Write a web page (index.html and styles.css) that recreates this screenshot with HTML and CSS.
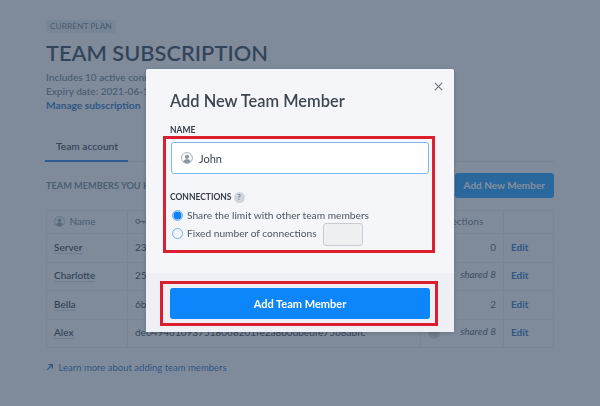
FILE: index.html
```html
<!DOCTYPE html>
<html lang="en">

<head>
    <meta charset="UTF-8">
    <title>Team Subscription</title>
    <link rel="stylesheet" href="styles.css">
</head>

<body>
    <div class="page">
        <span class="plan-tag">CURRENT PLAN</span>
        <h1>TEAM SUBSCRIPTION</h1>
        <p class="info">Includes 10 active connections</p>
        <p class="info">Expiry date: 2021-06-12</p>
        <a class="manage">Manage subscription</a>

        <div class="tabs">
            <span class="tab">Team account</span>
        </div>

        <div class="members-head">
            <span class="members-title">TEAM MEMBERS YOU HAVE ADDED</span>
            <span class="add-new">Add New Member</span>
        </div>

        <table class="members">
            <tr>
                <th class="col-name">
                    <svg class="user-icon" viewBox="0 0 16 16"><circle cx="8" cy="8" r="7.2" fill="none" stroke="currentColor"/><circle cx="8" cy="6.4" r="2.8" fill="currentColor"/><path d="M3 12.6c1-2.4 3-3 5-3s4 .6 5 3c-1.3 1.3-3 2-5 2s-3.7-.7-5-2z" fill="currentColor"/></svg>
                    Name
                </th>
                <th class="col-key">
                    <svg class="key-icon" viewBox="0 0 16 10"><circle cx="4" cy="5" r="2.8" fill="none" stroke="currentColor" stroke-width="1.5"/><path d="M7 5h8M12 5v3M15 5v2.5" fill="none" stroke="currentColor" stroke-width="1.5"/></svg>
                    Key
                </th>
                <th class="col-conn">Connections</th>
                <th class="col-edit"></th>
            </tr>
            <tr>
                <td><span class="member">Server</span></td>
                <td>23d81f6c0a47be95d2c8137ae60bf4d9a1c5e872</td>
                <td class="conn">0</td>
                <td><a class="edit">Edit</a></td>
            </tr>
            <tr>
                <td><span class="member">Charlotte</span></td>
                <td>25be07c94d1fa36e8b20c7d5f1936ea04b8d2c17</td>
                <td class="conn"><span class="info-dot"></span><i>shared 8</i></td>
                <td><a class="edit">Edit</a></td>
            </tr>
            <tr>
                <td><span class="member">Bella</span></td>
                <td>6bf2913ea7d05c48e16ba3</td>
                <td class="conn">2</td>
                <td><a class="edit">Edit</a></td>
            </tr>
            <tr>
                <td><span class="member">Alex</span></td>
                <td>de0494610937518068201fe2a8b0dbedfe7568abfc</td>
                <td class="conn"><span class="info-dot"></span><i>shared 8</i></td>
                <td><a class="edit">Edit</a></td>
            </tr>
        </table>

        <a class="learn">
            <svg class="arrow" viewBox="0 0 10 10"><path d="M1.5 8.5L8 2M3 2h5v5" fill="none" stroke="currentColor" stroke-width="1.5"/></svg>
            Learn more about adding team members
        </a>
    </div>

    <div class="overlay"></div>

    <div class="modal">
        <div class="modal-body">
            <span class="close">
                <svg viewBox="0 0 10 10"><path d="M1 1l8 8M9 1l-8 8" fill="none" stroke="currentColor" stroke-width="1.3"/></svg>
            </span>
            <h2>Add New Team Member</h2>
            <label class="field-label">NAME</label>
            <div class="name-input">
                <svg class="user-icon" viewBox="0 0 16 16"><circle cx="8" cy="8" r="7.2" fill="none" stroke="currentColor"/><circle cx="8" cy="6.4" r="2.8" fill="currentColor"/><path d="M3 12.6c1-2.4 3-3 5-3s4 .6 5 3c-1.3 1.3-3 2-5 2s-3.7-.7-5-2z" fill="currentColor"/></svg>
                <span>John</span>
            </div>
            <div class="conn-label">
                <span class="field-label">CONNECTIONS</span>
                <span class="help">?</span>
            </div>
            <div class="radio-row">
                <span class="radio checked"></span>
                <span>Share the limit with other team members</span>
            </div>
            <div class="radio-row">
                <span class="radio"></span>
                <span>Fixed number of connections</span>
                <span class="number-box"></span>
            </div>
        </div>
        <div class="modal-foot">
            <button class="submit">Add Team Member</button>
        </div>
        <div class="mark mark-form"></div>
        <div class="mark mark-button"></div>
    </div>
</body>

</html>
```

FILE: styles.css
```css
html,
body {
    height: 100%;
}

body {
    margin: 0;
    background: #f6f7f9;
    color: #1f2d3d;
    font-family: Lato, "Open Sans", sans-serif;
    overflow: hidden;
}

.page {
    width: 508px;
    padding: 20px 46px 0;
}

.plan-tag {
    display: block;
    width: fit-content;
    padding: 0 4px;
    background: #e3e6ea;
    border-radius: 2px;
    color: #5c6b7c;
    font-size: 8.4px;
    line-height: 13px;
}

h1 {
    margin: 7px 0 4px;
    font-size: 21.8px;
    line-height: 26px;
    font-weight: 600;
}

.info {
    margin: 0;
    color: #667484;
    font-size: 10px;
    line-height: 14px;
    font-weight: 600;
}

.manage {
    display: block;
    color: #0f5fb5;
    font-size: 10.2px;
    line-height: 14px;
    font-weight: 700;
}

.tabs {
    margin-top: 28px;
    height: 21px;
    border-bottom: 1px solid #dcdfe4;
}

.tab {
    display: block;
    width: 83px;
    height: 22px;
    margin-left: -1px;
    padding-left: 11px;
    box-sizing: border-box;
    border-bottom: 2px solid #0f6fd0;
    font-size: 10.2px;
    line-height: 13px;
    font-weight: 600;
}

.members-head {
    display: flex;
    justify-content: space-between;
    align-items: center;
    margin-top: 11px;
}

.members-title {
    color: #667484;
    font-size: 9.2px;
    font-weight: 700;
}

.add-new {
    padding: 0 9px;
    background: #008fff;
    border-radius: 3px;
    color: #fff;
    font-size: 10px;
    line-height: 25px;
    font-weight: 700;
}

.members {
    width: 100%;
    margin-top: 12px;
    border-collapse: collapse;
    table-layout: fixed;
    font-size: 10px;
}

.members th,
.members td {
    height: 28.5px;
    padding: 0 7px 2px;
    box-sizing: border-box;
    border: 1px solid #e1e4e8;
    white-space: nowrap;
    overflow: hidden;
    text-align: left;
}

.members th {
    height: 23px;
    color: #5c6b7c;
    font-weight: 400;
}

.col-name {
    width: 81px;
}

.col-conn {
    width: 83px;
}

.col-edit {
    width: 50px;
}

.members .conn {
    text-align: right;
    color: #3a4757;
}

.info-dot {
    float: left;
    width: 12px;
    height: 12px;
    margin-top: 2px;
    background: #ccd1d7;
    border-radius: 50%;
}

.member {
    border-bottom: 1px solid #c6cbd2;
    font-weight: 600;
}

.edit {
    color: #0f5fb5;
    font-weight: 700;
}

.user-icon {
    width: 11px;
    height: 11px;
    vertical-align: -2px;
    margin-right: 2px;
    color: #8b96a3;
}

.key-icon {
    width: 11px;
    height: 7px;
    color: #5c6b7c;
}

.learn {
    display: block;
    margin-top: 14px;
    color: #0f5fb5;
    font-size: 9.5px;
}

.arrow {
    width: 8px;
    height: 8px;
    margin-right: 2px;
}

.overlay {
    position: fixed;
    inset: 0;
    background: rgba(63, 81, 105, 0.65);
}

.modal {
    position: fixed;
    left: 146px;
    top: 69px;
    width: 308px;
    height: 263px;
    display: flex;
    flex-direction: column;
    background: #f5f6f9;
    box-shadow: 0 1px 4px rgba(0, 0, 0, 0.2);
    border-radius: 2px;
}

.modal-body {
    flex: 1;
    padding: 22px 25px 0 24px;
}

.close {
    position: absolute;
    top: 13px;
    right: 11px;
    width: 9px;
    height: 9px;
    color: #6d7783;
}

.close svg {
    display: block;
}

h2 {
    margin: 0 0 13px;
    color: #3c4650;
    font-size: 16.4px;
    line-height: 20px;
    font-weight: 600;
}

.field-label {
    display: block;
    color: #343d47;
    font-size: 8.5px;
    line-height: 12px;
    font-weight: 700;
}

.name-input {
    display: flex;
    align-items: center;
    gap: 6px;
    height: 32px;
    box-sizing: border-box;
    margin: 6px 0 0 1px;
    padding-left: 9px;
    background: #fff;
    border: 1.5px solid #7db8ee;
    border-radius: 3px;
    color: #3a4450;
    font-size: 11px;
}

.name-input .user-icon {
    width: 12px;
    height: 12px;
    margin: 0;
}

.conn-label {
    display: flex;
    align-items: center;
    gap: 2px;
    margin: 17px 0 3px;
}

.help {
    width: 11px;
    height: 11px;
    background: #d0d6dc;
    border-radius: 50%;
    color: #7a8591;
    font-size: 8px;
    line-height: 11px;
    font-weight: 700;
    text-align: center;
}

.radio-row {
    display: flex;
    align-items: center;
    height: 18px;
    margin-left: 2px;
    color: #4b5561;
    font-size: 10.2px;
}

.radio {
    width: 9px;
    height: 9px;
    margin-right: 4px;
    border: 1px solid #6fb1ef;
    border-radius: 50%;
}

.radio.checked {
    border-color: #7fbcf5;
    background: #0f83f5;
    box-shadow: inset 0 0 0 0.5px #fff;
}

.number-box {
    width: 40px;
    height: 23px;
    box-sizing: border-box;
    margin: 3px 0 0 6px;
    background: #eef0f2;
    border: 1px solid #c7ccd2;
    border-radius: 3px;
}

.modal-foot {
    height: 59px;
    padding: 15px 24px 0;
    box-sizing: border-box;
    background: #eef0f5;
}

.submit {
    display: block;
    width: 100%;
    height: 31px;
    padding: 0;
    background: #0d85fb;
    border: none;
    border-radius: 3px;
    color: #fff;
    font-family: inherit;
    font-size: 11px;
    font-weight: 700;
}

.mark {
    position: absolute;
    box-sizing: border-box;
    border: 3px solid #dc1f2e;
}

.mark-form {
    left: 17px;
    top: 67px;
    width: 272px;
    height: 117px;
}

.mark-button {
    left: 14px;
    top: 212px;
    width: 278px;
    height: 45px;
}
```
